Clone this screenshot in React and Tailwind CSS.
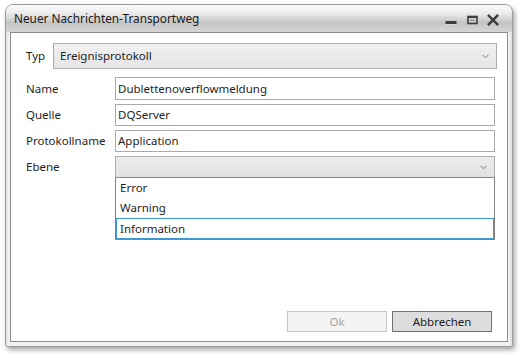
import React from 'react';

const font = "font-['Segoe_UI','Noto_Sans',sans-serif]";

function Chevron() {
  return (
    <svg width="7" height="5" viewBox="0 0 7 5" className="shrink-0">
      <path d="M0.5 0.8 L3.5 3.8 L6.5 0.8" fill="none" stroke="#7a7a7a" strokeWidth="1" />
    </svg>
  );
}

function TitleButtons() {
  return (
    <div className="flex items-center pr-[13px] pt-[2px]">
      <svg width="12" height="12" viewBox="0 0 12 12">
        <rect x="0.5" y="7" width="11" height="3" fill="#3c3c3c" />
        <rect x="0.5" y="10" width="11" height="1" fill="#d8d8d8" />
      </svg>
      <svg width="11" height="12" viewBox="0 0 11 12" className="ml-[10px]">
        <rect x="1" y="2.5" width="9" height="7" fill="none" stroke="#3c3c3c" strokeWidth="1.6" />
        <rect x="1" y="2" width="9" height="2" fill="#3c3c3c" />
        <rect x="3" y="5.5" width="5" height="1.5" fill="#9a9a9a" />
      </svg>
      <svg width="12" height="12" viewBox="0 0 12 12" className="ml-[9px]">
        <path d="M1.8 1.8 L10.2 10.2 M10.2 1.8 L1.8 10.2" stroke="#3c3c3c" strokeWidth="2.4" strokeLinecap="square" />
      </svg>
    </div>
  );
}

function TextRow({ label, value, h }) {
  return (
    <div className={`flex items-center ${h}`}>
      <div className="w-[89px] text-[11.5px] text-[#1e1e1e]">{label}</div>
      <div className="flex-1 h-full border border-[#ababab] bg-white flex items-center px-[2px] text-[11.5px] text-[#1e1e1e]">
        {value}
      </div>
    </div>
  );
}

export default function App() {
  return (
    <div className={`w-[520px] h-[356px] bg-white pl-[5px] pt-[4px] ${font}`}>
      <div className="w-[508px] h-[343px] rounded-t-[8px] rounded-b-[3px] border border-[#9a9a9a] bg-[#e9e9e9] flex flex-col shadow-[2px_3px_5px_rgba(0,0,0,0.35)] overflow-hidden">
        <div className="h-[27px] shrink-0 flex items-center justify-between bg-[linear-gradient(to_bottom,#fbfbfb_0%,#ececec_30%,#c4c4c4_65%,#d6d6d6_100%)]">
          <div className="pl-[8px] text-[11.8px] text-[#1a1a1a]">Neuer Nachrichten-Transportweg</div>
          <TitleButtons />
        </div>
        <div className="flex-1 px-[4px] pb-[4px] bg-[linear-gradient(to_right,#dedede,#f2f2f2_3px,#f2f2f2_calc(100%-3px),#dedede)]">
          <div className="h-full border border-[#8c8c8c] bg-white flex flex-col pl-[15px] pr-[12px] pt-[10px] pb-[9px]">
            <div className="flex items-center h-[26px]">
              <div className="w-[27px] text-[11.5px] text-[#1e1e1e]">Typ</div>
              <div className="flex-1 h-full mr-[-2px] border border-[#adadad] bg-[linear-gradient(to_bottom,#f0f0f0,#e5e5e5)] flex items-center justify-between pl-[6px] pr-[7px] text-[11.5px] text-[#1e1e1e]">
                <span>Ereignisprotokoll</span>
                <Chevron />
              </div>
            </div>
            <div className="flex flex-col gap-[4px] mt-[8px]">
              <TextRow label="Name" value="Dublettenoverflowmeldung" h="h-[23px]" />
              <TextRow label="Quelle" value="DQServer" h="h-[22px]" />
              <TextRow label="Protokollname" value="Application" h="h-[22px]" />
              <div className="flex items-start">
                <div className="w-[89px] h-[22px] flex items-center text-[11.5px] text-[#1e1e1e]">Ebene</div>
                <div className="flex-1 flex flex-col">
                  <div className="h-[22px] border border-[#adadad] border-b-[#8a8a8a] bg-[linear-gradient(to_bottom,#ececec,#e2e2e2)] flex items-center justify-end pr-[7px]">
                    <Chevron />
                  </div>
                  <div className="border border-[#828282] border-t-0 bg-white flex flex-col text-[11.5px] text-[#1e1e1e]">
                    <div className="h-[20px] flex items-center px-[3px] border border-transparent">Error</div>
                    <div className="h-[20px] flex items-center px-[3px] border border-transparent">Warning</div>
                    <div className="h-[21px] flex items-center px-[3px] border border-[#3c9bd6]">Information</div>
                  </div>
                </div>
              </div>
            </div>
            <div className="mt-auto flex justify-end gap-[5px] pr-[3px]">
              <div className="w-[100px] h-[21px] border border-[#c6c6c6] bg-[#f4f4f4] flex items-center justify-center text-[11.5px] text-[#a3a3a3]">
                Ok
              </div>
              <div className="w-[100px] h-[21px] border border-[#707070] bg-[#dddddd] flex items-center justify-center text-[11.5px] text-[#1e1e1e]">
                Abbrechen
              </div>
            </div>
          </div>
        </div>
      </div>
    </div>
  );
}
